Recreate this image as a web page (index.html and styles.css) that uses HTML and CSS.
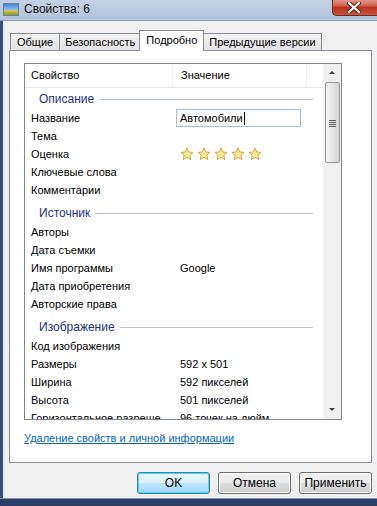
FILE: index.html
```html
<!DOCTYPE html>
<html lang="ru">
<head>
    <meta charset="UTF-8">
    <meta name="viewport" content="width=device-width, initial-scale=1.0">
    <title>Свойства: 6</title>
    <link rel="stylesheet" href="styles.css">
</head>
<body>
<div class="window">
    <div class="titlebar">
        <svg class="app-icon" width="16" height="13" viewBox="0 0 16 13">
            <defs>
                <linearGradient id="sky" x1="0" y1="0" x2="0" y2="1">
                    <stop offset="0" stop-color="#3d7fd6"/>
                    <stop offset="0.55" stop-color="#8fc3f0"/>
                    <stop offset="0.56" stop-color="#e7c34a"/>
                    <stop offset="1" stop-color="#6aa232"/>
                </linearGradient>
            </defs>
            <rect x="0.5" y="0.5" width="15" height="12" fill="url(#sky)" stroke="#6b7f99"/>
        </svg>
        <span class="title">Свойства: 6</span>
        <div class="close-btn">
            <svg width="14" height="11" viewBox="0 0 14 11">
                <path d="M2 1 L12 10 M12 1 L2 10" stroke="#5a1810" stroke-width="4" stroke-linecap="square"/>
                <path d="M2 1 L12 10 M12 1 L2 10" stroke="#fff" stroke-width="2.2" stroke-linecap="square"/>
            </svg>
        </div>
    </div>

    <div class="client">
        <!-- Вкладки -->
        <div class="tabs">
            <div class="tab">Общие</div>
            <div class="tab">Безопасность</div>
            <div class="tab active">Подробно</div>
            <div class="tab">Предыдущие версии</div>
        </div>

        <div class="panel">
            <div class="listview">
                <div class="list">
                    <div class="list-header">
                        <div class="col-name">Свойство</div>
                        <div class="col-value">Значение</div>
                        <div class="col-rest"></div>
                    </div>

                    <div class="group first"><span>Описание</span></div>
                    <div class="row"><div class="name">Название</div><div class="value"><span class="edit">Автомобили<span class="caret"></span></span></div></div>
                    <div class="row"><div class="name">Тема</div><div class="value"></div></div>
                    <div class="row">
                        <div class="name">Оценка</div>
                        <div class="value stars">
                            <svg class="star" viewBox="0 0 14 14"><path d="M7 1 L8.8 5 L13 5.4 L9.8 8.2 L10.8 12.6 L7 10.3 L3.2 12.6 L4.2 8.2 L1 5.4 L5.2 5 Z"/></svg>
                            <svg class="star" viewBox="0 0 14 14"><path d="M7 1 L8.8 5 L13 5.4 L9.8 8.2 L10.8 12.6 L7 10.3 L3.2 12.6 L4.2 8.2 L1 5.4 L5.2 5 Z"/></svg>
                            <svg class="star" viewBox="0 0 14 14"><path d="M7 1 L8.8 5 L13 5.4 L9.8 8.2 L10.8 12.6 L7 10.3 L3.2 12.6 L4.2 8.2 L1 5.4 L5.2 5 Z"/></svg>
                            <svg class="star" viewBox="0 0 14 14"><path d="M7 1 L8.8 5 L13 5.4 L9.8 8.2 L10.8 12.6 L7 10.3 L3.2 12.6 L4.2 8.2 L1 5.4 L5.2 5 Z"/></svg>
                            <svg class="star" viewBox="0 0 14 14"><path d="M7 1 L8.8 5 L13 5.4 L9.8 8.2 L10.8 12.6 L7 10.3 L3.2 12.6 L4.2 8.2 L1 5.4 L5.2 5 Z"/></svg>
                        </div>
                    </div>
                    <div class="row"><div class="name">Ключевые слова</div><div class="value"></div></div>
                    <div class="row"><div class="name">Комментарии</div><div class="value"></div></div>

                    <div class="group"><span>Источник</span></div>
                    <div class="row"><div class="name">Авторы</div><div class="value"></div></div>
                    <div class="row"><div class="name">Дата съемки</div><div class="value"></div></div>
                    <div class="row"><div class="name">Имя программы</div><div class="value">Google</div></div>
                    <div class="row"><div class="name">Дата приобретения</div><div class="value"></div></div>
                    <div class="row"><div class="name">Авторские права</div><div class="value"></div></div>

                    <div class="group"><span>Изображение</span></div>
                    <div class="row"><div class="name">Код изображения</div><div class="value"></div></div>
                    <div class="row"><div class="name">Размеры</div><div class="value">592 x 501</div></div>
                    <div class="row"><div class="name">Ширина</div><div class="value">592 пикселей</div></div>
                    <div class="row"><div class="name">Высота</div><div class="value">501 пикселей</div></div>
                    <div class="row"><div class="name">Горизонтальное разреше</div><div class="value">96 точек на дюйм</div></div>
                </div>

                <div class="scrollbar">
                    <div class="arrow up"></div>
                    <div class="thumb"><span class="grip"></span></div>
                    <div class="track"></div>
                    <div class="arrow down"></div>
                </div>
            </div>

            <a class="remove-link" href="#">Удаление свойств и личной информации</a>
        </div>

        <div class="buttons">
            <button class="btn default">OK</button>
            <button class="btn">Отмена</button>
            <button class="btn">Применить</button>
        </div>
    </div>
    <div class="frame-bottom"></div>
</div>
</body>
</html>
```

FILE: styles.css
```css
body {
    margin: 0;
    font-family: "Liberation Sans", Arial, sans-serif;
    font-size: 11px;
    color: #000;
    background: #2b3f66;
}
.window {
    width: 377px;
    height: 506px;
    overflow: hidden;
    display: flex;
    flex-direction: column;
    background: #f0f0f0;
}
.titlebar {
    height: 20px;
    flex: none;
    display: flex;
    align-items: center;
    background: linear-gradient(to bottom, #c3d2e6, #b2c4dc);
    border-bottom: 1px solid #8d9db5;
    position: relative;
}
.app-icon {
    margin-left: 3px;
    margin-top: -2px;
}
.title {
    margin-left: 5px;
    margin-top: -2px;
    font-size: 12px;
    color: #111;
}
.close-btn {
    position: absolute;
    right: -4px;
    top: -3px;
    width: 47px;
    height: 17px;
    border: 1px solid #6d2a22;
    border-radius: 0 0 4px 4px;
    background: linear-gradient(to bottom, #e9a99c, #d1614f 45%, #b8321f 55%, #c8553e);
    display: flex;
    justify-content: center;
    align-items: center;
}
.close-btn svg {
    margin-left: -6px;
    margin-top: 2px;
}
.client {
    flex: 1;
    display: flex;
    flex-direction: column;
    border-left: 3px solid #384d77;
    box-shadow: inset 1px 0 0 #e4eaf3;
    padding-left: 6px;
}
.frame-bottom {
    height: 7px;
    flex: none;
    background: #2b3f66;
    border-top: 1px solid #7d93b9;
}

/* Вкладки */
.tabs {
    display: flex;
    align-items: flex-end;
    height: 20px;
    margin-top: 9px;
    padding-left: 1px;
    position: relative;
    z-index: 1;
}
.tab {
    height: 16px;
    line-height: 17px;
    padding: 0 5px;
    border: 1px solid #898c95;
    border-bottom: none;
    margin-right: -1px;
    background: linear-gradient(to bottom, #f2f2f2, #e3e3e3);
    white-space: nowrap;
}
.tab:first-child {
    padding: 0 6px;
}
.tab.active {
    height: 20px;
    line-height: 18px;
    background: #fff;
    margin: 0 -1px 0 -1px;
    padding: 0 6px;
    position: relative;
    top: 1px;
    z-index: 2;
}
.panel {
    width: 361px;
    height: 411px;
    background: #fff;
    border: 1px solid #898c95;
    display: flex;
    flex-direction: column;
}

/* Список свойств */
.listview {
    display: flex;
    width: 316px;
    height: 355px;
    margin: 12px 0 0 14px;
    border: 1px solid #828790;
    overflow: hidden;
}
.list {
    flex: 1;
    overflow: hidden;
}
.list-header {
    display: flex;
    height: 23px;
    border-bottom: 1px solid #e3e5ea;
    align-items: center;
}
.list-header .col-name {
    width: 141px;
    padding-left: 6px;
    border-right: 1px solid #eef0f3;
    height: 23px;
    line-height: 23px;
}
.list-header .col-value {
    width: 125px;
    padding-left: 8px;
    border-right: 1px solid #eef0f3;
    height: 23px;
    line-height: 23px;
}
.list-header .col-rest {
    flex: 1;
}
.group {
    height: 20px;
    padding-top: 4px;
    padding-left: 14px;
    padding-right: 10px;
    display: flex;
    align-items: center;
    color: #1e3287;
    font-size: 12px;
}
.group.first {
    height: 20px;
    padding-top: 1px;
}
.group::after {
    content: "";
    flex: 1;
    height: 1px;
    background: #b5c2d9;
    margin-left: 5px;
}
.row {
    display: flex;
    height: 18px;
    align-items: center;
    white-space: nowrap;
}
.row .name {
    width: 141px;
    padding-left: 6px;
    overflow: hidden;
}
.row .value {
    padding-left: 8px;
    display: flex;
    align-items: center;
}
.edit {
    display: flex;
    align-items: center;
    width: 120px;
    height: 16px;
    margin-left: -4px;
    padding-left: 3px;
    border: 1px solid #a9bfd6;
    box-shadow: inset 0 0 0 1px #f4f8fc;
}
.caret {
    width: 1px;
    height: 13px;
    background: #000;
    margin-left: 1px;
}
.stars {
    gap: 3px;
}
.star {
    width: 14px;
    height: 14px;
}
.star path {
    fill: #fbe79a;
    stroke: #d8a63a;
    stroke-width: 1;
    stroke-linejoin: round;
}

/* Полоса прокрутки */
.scrollbar {
    width: 17px;
    display: flex;
    flex-direction: column;
    background: #f0f0f0;
    border-left: 1px solid #f5f5f5;
}
.arrow {
    height: 18px;
    position: relative;
}
.arrow::after {
    content: "";
    position: absolute;
    left: 5px;
    top: 7px;
    border-left: 3px solid transparent;
    border-right: 3px solid transparent;
}
.arrow.up::after {
    border-bottom: 3px solid #404040;
}
.arrow.down::after {
    border-top: 3px solid #404040;
}
.thumb {
    height: 79px;
    margin: 0 1px;
    border: 1px solid #979797;
    border-radius: 2px;
    background: linear-gradient(to right, #f4f4f4, #e6e6e6 50%, #d4d4d4);
    display: flex;
    justify-content: center;
    align-items: center;
}
.grip {
    width: 7px;
    height: 1px;
    background: #5a5a5a;
    box-shadow: 0 2px 0 #5a5a5a, 0 4px 0 #5a5a5a, 0 -2px 0 #5a5a5a;
}
.track {
    flex: 1;
}

.remove-link {
    margin: 10px 0 0 14px;
    color: #0066cc;
    line-height: 16px;
    align-self: flex-start;
}

/* Кнопки */
.buttons {
    display: flex;
    justify-content: flex-end;
    gap: 8px;
    width: 363px;
    margin-top: 9px;
}
.btn {
    width: 73px;
    height: 22px;
    font-family: "Liberation Sans", Arial, sans-serif;
    font-size: 12px;
    color: #000;
    border: 1px solid #707070;
    border-radius: 3px;
    background: linear-gradient(to bottom, #f2f2f2 0%, #ebebeb 50%, #dddddd 51%, #cfcfcf 100%);
    box-shadow: inset 0 0 0 1px #fcfcfc;
    padding: 0;
}
.btn.default {
    border-color: #3c7fb1;
    background: linear-gradient(to bottom, #eaf6fd 0%, #d9f0fc 50%, #bee6fd 51%, #a7d9f5 100%);
    box-shadow: inset 0 0 0 1px #48d6f6;
}
```
